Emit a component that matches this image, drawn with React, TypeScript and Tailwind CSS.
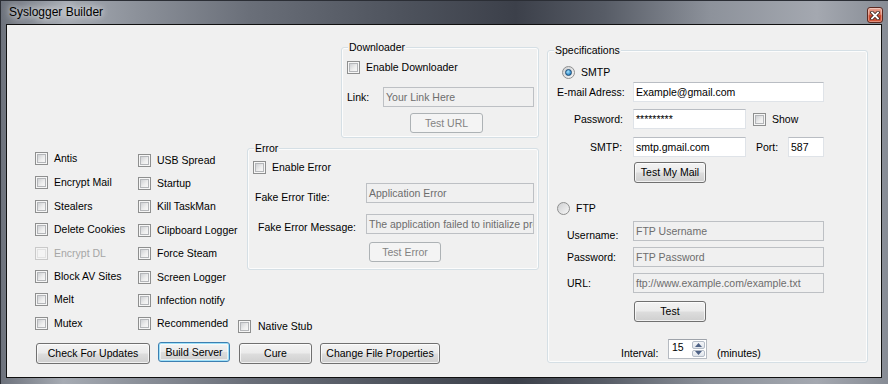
import React from "react";

const F = "font-['Liberation_Sans',Arial,sans-serif] text-[10.5px] leading-[13px] text-black";

function Box({ disabled }: { disabled?: boolean }) {
  return (
    <div
      className={`w-[13px] h-[13px] shrink-0 border p-[1px] ${
        disabled ? "border-[#c9c9c9] bg-[#f4f4f4]" : "border-[#8e8f8f] bg-[#f6f6f6]"
      }`}
    >
      <div
        className={`w-full h-full border ${
          disabled
            ? "border-[#e2e2e2] bg-[#f4f4f4]"
            : "border-[#b4b6b9] bg-[linear-gradient(135deg,#cfd1d4,#eeeeee_60%,#f7f7f7)]"
        }`}
      />
    </div>
  );
}

function Check({
  label,
  disabled,
  cls,
  gap = "gap-[6px]",
}: {
  label: string;
  disabled?: boolean;
  cls: string;
  gap?: string;
}) {
  return (
    <div className={`flex items-center ${gap} ${cls}`}>
      <Box disabled={disabled} />
      <span className={`whitespace-nowrap ${disabled ? "text-[#a6a6a6]" : ""}`}>{label}</span>
    </div>
  );
}

function Radio({ checked }: { checked?: boolean }) {
  return (
    <div className="w-[13px] h-[13px] shrink-0 rounded-full border border-[#8e8f8f] bg-[linear-gradient(135deg,#cfd0d2,#f6f6f6)] flex items-center justify-center">
      {checked && (
        <div className="w-[7px] h-[7px] rounded-full border border-[#1d4a72] bg-[radial-gradient(circle_at_40%_35%,#a6e4ff,#2b86c7_70%)]" />
      )}
    </div>
  );
}

function TextBox({
  value,
  disabled,
  cls,
}: {
  value: string;
  disabled?: boolean;
  cls: string;
}) {
  return (
    <div
      className={`h-[20px] shrink-0 border flex items-center pl-[2px] overflow-hidden whitespace-nowrap ${cls} ${
        disabled
          ? "bg-[#f0f0f0] border-[#bdc0c4] text-[#6d6d6d]"
          : "bg-white border-[#dfe3e8] border-t-[#b9bdc3]"
      }`}
    >
      {value}
    </div>
  );
}

function Button({
  label,
  cls,
  disabled,
  focused,
}: {
  label: string;
  cls: string;
  disabled?: boolean;
  focused?: boolean;
}) {
  let look =
    "border-[#707070] bg-[linear-gradient(#f3f3f3_0%,#ebebeb_48%,#dddddd_52%,#cfcfcf_100%)] shadow-[inset_0_0_0_1px_rgba(255,255,255,0.7)]";
  if (disabled) look = "border-[#adb2b5] bg-[#f4f4f4] text-[#838383]";
  if (focused)
    look =
      "border-[#3c7fb1] bg-[linear-gradient(#f3f3f3_0%,#ebebeb_48%,#dddddd_52%,#cfcfcf_100%)] shadow-[inset_0_0_0_1px_#9fe0f8,inset_0_0_0_2px_rgba(255,255,255,0.6)]";
  return (
    <div
      className={`shrink-0 rounded-[3px] border flex items-center justify-center whitespace-nowrap ${look} ${cls}`}
    >
      {label}
    </div>
  );
}

function Group({
  title,
  cls,
  children,
}: {
  title: string;
  cls: string;
  children: React.ReactNode;
}) {
  return (
    <div
      className={`relative shrink-0 rounded-[3px] border border-[#d5dfe5] shadow-[inset_0_0_0_1px_rgba(255,255,255,0.8)] flex flex-col ${cls}`}
    >
      <span className="absolute left-[6px] top-[-7px] px-[1px] bg-[#f0f0f0] whitespace-nowrap">{title}</span>
      {children}
    </div>
  );
}

const col1 = [
  { label: "Antis", cls: "h-[24px]" },
  { label: "Encrypt Mail", cls: "h-[24px]" },
  { label: "Stealers", cls: "h-[24px]" },
  { label: "Delete Cookies", cls: "h-[23px]" },
  { label: "Encrypt DL", cls: "h-[24px]", disabled: true },
  { label: "Block AV Sites", cls: "h-[23px]" },
  { label: "Melt", cls: "h-[23px]" },
  { label: "Mutex", cls: "h-[24px]" },
];

const col2 = [
  { label: "USB Spread", cls: "h-[24px]" },
  { label: "Startup", cls: "h-[23px]" },
  { label: "Kill TaskMan", cls: "h-[23px]" },
  { label: "Clipboard Logger", cls: "h-[24px]" },
  { label: "Force Steam", cls: "h-[23px]" },
  { label: "Screen Logger", cls: "h-[24px]" },
  { label: "Infection notify", cls: "h-[23px]" },
  { label: "Recommended", cls: "h-[23px]" },
];

function Spinner() {
  return (
    <div className="h-[20px] w-[39px] shrink-0 border border-[#b5bac1] border-t-[#9ea3aa] bg-white flex">
      <div className="flex-1 pl-[3px] pt-[1px] leading-[13px]">15</div>
      <div className="w-[15px] flex flex-col gap-[1px] p-[1px]">
        <div className="flex-1 rounded-[2px] border border-[#b4bcc7] bg-[linear-gradient(#f4f6f9,#dfe4ea)] flex items-center justify-center">
          <svg width="7" height="4" viewBox="0 0 7 4">
            <path d="M0 4 L3.5 0 L7 4 Z" fill="#4d6185" />
          </svg>
        </div>
        <div className="flex-1 rounded-[2px] border border-[#b4bcc7] bg-[linear-gradient(#f4f6f9,#dfe4ea)] flex items-center justify-center">
          <svg width="7" height="4" viewBox="0 0 7 4">
            <path d="M0 0 L3.5 4 L7 0 Z" fill="#4d6185" />
          </svg>
        </div>
      </div>
    </div>
  );
}

export default function App() {
  return (
    <div
      className={`w-[888px] h-[384px] overflow-hidden flex flex-col border-t border-l border-[#2b2e35] bg-[linear-gradient(90deg,#6d727c_0%,#a6abb3_7%,#8a8f98_16%,#6a6f79_28%,#4e535d_45%,#3c404a_58%,#575c66_68%,#8d929b_80%,#a4a8b0_92%,#878c95_100%)] ${F}`}
    >
      {/* title bar */}
      <div className="h-[23px] shrink-0 flex items-start">
        <span className="ml-[8px] mt-[4px] text-[12px] leading-[15px] text-black [text-shadow:0_0_6px_rgba(255,255,255,0.9),0_0_10px_rgba(255,255,255,0.6)]">
          Syslogger Builder
        </span>
        <div className="ml-auto mr-[5px] mt-[6px] w-[16px] h-[16px] rounded-[3px] border border-[#5b2a22] bg-[linear-gradient(#e8a696_0%,#d9775f_45%,#c7442a_55%,#d3583b_100%)] shadow-[inset_0_0_0_1px_rgba(255,255,255,0.35)] flex items-center justify-center">
          <svg width="10" height="9" viewBox="0 0 10 9">
            <path d="M2 1.5 L8 7.5 M8 1.5 L2 7.5" stroke="#3a2420" strokeWidth="3.4" strokeLinecap="square" />
            <path d="M2 1.5 L8 7.5 M8 1.5 L2 7.5" stroke="#ffffff" strokeWidth="1.8" strokeLinecap="square" />
          </svg>
        </div>
      </div>

      {/* client area */}
      <div className="ml-[5px] w-[876px] h-[354px] shrink-0 border border-[#101010] bg-[#f0f0f0] flex">
        {/* left part */}
        <div className="w-[540px] shrink-0 flex flex-col">
          <Group title="Downloader" cls="ml-[334px] mt-[22px] w-[198px] h-[91px]">
            <Check label="Enable Downloader" cls="ml-[5px] mt-[13px] h-[13px]" />
            <div className="mt-[13px] h-[20px] flex items-center">
              <span className="ml-[5px] w-[36px]">Link:</span>
              <TextBox value="Your Link Here" disabled cls="w-[151px]" />
            </div>
            <Button label="Test URL" disabled cls="ml-[68px] mt-[6px] w-[73px] h-[20px]" />
          </Group>

          <div className="mt-[8px] h-[197px] flex">
            <div className="ml-[28px] w-[103px] shrink-0 flex flex-col">
              {col1.map((c) => (
                <Check key={c.label} label={c.label} cls={c.cls} disabled={c.disabled} />
              ))}
            </div>
            <div className="mt-[2px] w-[100px] shrink-0 flex flex-col">
              {col2.map((c) => (
                <Check key={c.label} label={c.label} cls={c.cls} />
              ))}
            </div>
            <div className="w-[301px] shrink-0 flex flex-col">
              <Group title="Error" cls="ml-[9px] mt-[2px] w-[292px] h-[122px]">
                <Check label="Enable Error" cls="ml-[5px] mt-[12px] h-[13px]" />
                <div className="mt-[9px] h-[20px] flex items-start">
                  <span className="ml-[7px] w-[111px] mt-[4px] leading-[20px]">Fake Error Title:</span>
                  <TextBox value="Application Error" disabled cls="w-[168px]" />
                </div>
                <div className="mt-[11px] h-[20px] flex items-start">
                  <span className="ml-[10px] w-[108px] mt-[3px] leading-[20px]">Fake Error Message:</span>
                  <TextBox value="The application failed to initialize properly" disabled cls="w-[168px]" />
                </div>
                <Button label="Test Error" disabled cls="ml-[121px] mt-[8px] w-[72px] h-[20px]" />
              </Group>
              <Check label="Native Stub" cls="mt-[50px] h-[13px]" gap="gap-[7px]" />
            </div>
          </div>

          <div className="flex items-start">
            <Button label="Check For Updates" cls="ml-[29px] w-[114px] h-[21px]" />
            <Button label="Build Server" focused cls="ml-[8px] -mt-[1px] w-[72px] h-[20px]" />
            <Button label="Cure" cls="ml-[9px] w-[73px] h-[21px]" />
            <Button label="Change File Properties" cls="ml-[8px] w-[120px] h-[21px]" />
          </div>
        </div>

        {/* specifications */}
        <Group title="Specifications" cls="mt-[25px] w-[321px] h-[313px]">
          <div className="ml-[14px] mt-[15px] h-[13px] flex items-center gap-[6px]">
            <Radio checked />
            <span>SMTP</span>
          </div>
          <div className="mt-[3px] h-[20px] flex items-center">
            <span className="ml-[9px] w-[76px]">E-mail Adress:</span>
            <TextBox value="Example@gmail.com" cls="w-[191px]" />
          </div>
          <div className="mt-[7px] h-[20px] flex items-center">
            <span className="ml-[26px] w-[59px]">Password:</span>
            <TextBox value="*********" cls="w-[113px]" />
            <Check label="Show" cls="ml-[7px] h-[13px]" />
          </div>
          <div className="mt-[8px] h-[20px] flex items-center">
            <span className="ml-[42px] w-[43px]">SMTP:</span>
            <TextBox value="smtp.gmail.com" cls="w-[113px]" />
            <span className="ml-[10px] w-[32px]">Port:</span>
            <TextBox value="587" cls="w-[36px]" />
          </div>
          <Button label="Test My Mail" cls="ml-[86px] mt-[5px] w-[72px] h-[21px]" />

          <div className="ml-[9px] mt-[19px] h-[13px] flex items-center gap-[6px]">
            <Radio />
            <span>FTP</span>
          </div>
          <div className="mt-[6px] h-[20px] flex items-start">
            <span className="ml-[19px] w-[66px] mt-[4px] leading-[20px]">Username:</span>
            <TextBox value="FTP Username" disabled cls="w-[191px]" />
          </div>
          <div className="mt-[6px] h-[20px] flex items-center">
            <span className="ml-[19px] w-[66px]">Password:</span>
            <TextBox value="FTP Password" disabled cls="w-[191px]" />
          </div>
          <div className="mt-[6px] h-[20px] flex items-center">
            <span className="ml-[19px] w-[66px]">URL:</span>
            <TextBox value="ftp://www.example.com/example.txt" disabled cls="w-[191px]" />
          </div>
          <Button label="Test" cls="ml-[86px] mt-[8px] w-[72px] h-[21px]" />

          <div className="mt-[17px] h-[20px] flex items-start">
            <span className="ml-[73px] w-[47px] mt-[4px] leading-[20px]">Interval:</span>
            <Spinner />
            <span className="ml-[10px] mt-[4px] leading-[20px]">(minutes)</span>
          </div>
        </Group>
      </div>
    </div>
  );
}
